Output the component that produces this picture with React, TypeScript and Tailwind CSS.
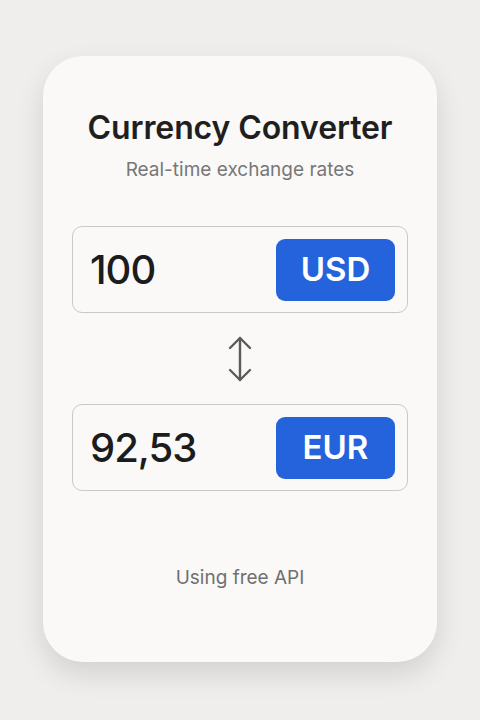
const ArrowUpDown = () => (
  <svg width="24" height="46" viewBox="0 0 24 46" fill="none" stroke="#5b5b5b" strokeWidth="2.4" strokeLinecap="round" strokeLinejoin="round">
    <path d="M12 2v42" />
    <path d="M2 12 12 2l10 10" />
    <path d="M2 34l10 10 10-10" />
  </svg>
);

const AmountRow = ({ value, code }: { value: string; code: string }) => (
  <div className="flex items-center justify-between h-[87px] rounded-[10px] border-[1.5px] border-[#c9c9c7] pl-[17px] pr-[12px]">
    <span className="text-[40px] font-medium text-[#1c1c1c] tracking-[-1px]">{value}</span>
    <button className="w-[119px] h-[62px] rounded-[9px] bg-[#2563dc] text-white text-[33px] font-semibold">
      {code}
    </button>
  </div>
);

export default function App() {
  return (
    <div className="min-h-screen bg-[#efeeec] flex justify-center pt-[56px] font-['Inter',sans-serif]">
      <div className="w-[394px] h-[606px] rounded-[40px] bg-[#faf9f7] shadow-[0_12px_28px_rgba(0,0,0,0.12)] flex flex-col px-[29px] pt-[52px]">
        <h1 className="text-center text-[32px] leading-[40px] font-semibold text-[#1f1f1f] tracking-[-0.1px]">
          Currency Converter
        </h1>
        <p className="text-center text-[19px] leading-[28px] text-[#777777] mt-[8px]">
          Real-time exchange rates
        </p>

        {/* Converter */}
        <div className="mt-[42px]">
          <AmountRow value="100" code="USD" />
          <div className="flex justify-center items-center h-[91px]">
            <ArrowUpDown />
          </div>
          <AmountRow value="92,53" code="EUR" />
        </div>

        <p className="text-center text-[19px] leading-[28px] text-[#707070] mt-[73px]">
          Using free API
        </p>
      </div>
    </div>
  );
}
